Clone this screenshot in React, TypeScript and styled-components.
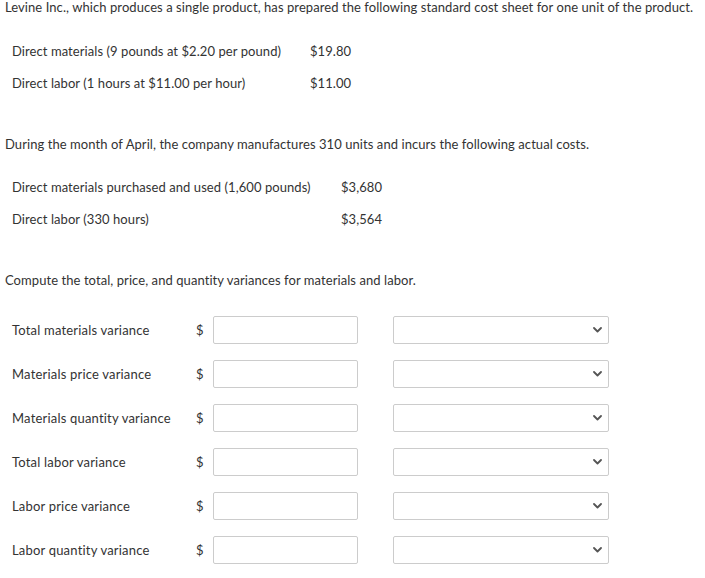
import React from "react";
import styled, { createGlobalStyle } from "styled-components";

const GlobalStyle = createGlobalStyle`
  html, body {
    margin: 0;
    padding: 0;
    background: #fff;
  }
  body {
    font-family: Lato, "Open Sans", Arial, sans-serif;
    font-size: 13px;
    color: #333;
    letter-spacing: 0.07px;
  }
`;

const standardCosts = [
  { label: "Direct materials (9 pounds at $2.20 per pound)", value: "$19.80" },
  { label: "Direct labor (1 hours at $11.00 per hour)", value: "$11.00" },
];

const actualCosts = [
  { label: "Direct materials purchased and used (1,600 pounds)", value: "$3,680" },
  { label: "Direct labor (330 hours)", value: "$3,564" },
];

const variances = [
  "Total materials variance",
  "Materials price variance",
  "Materials quantity variance",
  "Total labor variance",
  "Labor price variance",
  "Labor quantity variance",
];

function Chevron() {
  return (
    <svg width="9" height="6" viewBox="0 0 9 6">
      <polyline
        points="1,1 4.5,4.5 8,1"
        fill="none"
        stroke="#555"
        strokeWidth="1.8"
        strokeLinecap="round"
        strokeLinejoin="round"
      />
    </svg>
  );
}

function App() {
  return (
    <Page>
      <GlobalStyle />
      <Paragraph>
        Levine Inc., which produces a single product, has prepared the following standard cost sheet for
        one unit of the product.
      </Paragraph>

      <CostTable $labelWidth={298} $top={22}>
        {standardCosts.map((c) => (
          <CostRow key={c.label}>
            <CostLabel>{c.label}</CostLabel>
            <CostValue>{c.value}</CostValue>
          </CostRow>
        ))}
      </CostTable>

      <Paragraph $top={38}>
        During the month of April, the company manufactures 310 units and incurs the following actual costs.
      </Paragraph>

      <CostTable $labelWidth={329} $top={21}>
        {actualCosts.map((c) => (
          <CostRow key={c.label}>
            <CostLabel>{c.label}</CostLabel>
            <CostValue>{c.value}</CostValue>
          </CostRow>
        ))}
      </CostTable>

      <Paragraph $top={38}>Compute the total, price, and quantity variances for materials and labor.</Paragraph>

      <AnswerList>
        {variances.map((v) => (
          <AnswerRow key={v}>
            <AnswerLabel>{v}</AnswerLabel>
            <Dollar>$</Dollar>
            <AmountInput type="text" />
            <SelectBox>
              <Chevron />
            </SelectBox>
          </AnswerRow>
        ))}
      </AnswerList>
    </Page>
  );
}

const Page = styled.div`
  width: 705px;
  padding: 0 0 10px 0;
`;

const Paragraph = styled.p<{ $top?: number }>`
  margin: ${({ $top }) => $top || 0}px 0 0 0;
  padding-left: 5px;
  line-height: 14px;
  white-space: nowrap;
`;

const CostTable = styled.div<{ $labelWidth: number; $top: number }>`
  margin-top: ${({ $top }) => $top}px;
  padding-left: 12px;
  display: grid;
  grid-template-columns: ${({ $labelWidth }) => $labelWidth}px auto;
  justify-content: start;
`;

const CostRow = styled.div`
  display: contents;
`;

const CostLabel = styled.div`
  height: 31.5px;
  line-height: 31.5px;
  white-space: nowrap;
`;

const CostValue = styled.div`
  height: 31.5px;
  line-height: 31.5px;
`;

const AnswerList = styled.div`
  margin-top: 21px;
  padding-left: 12px;
  display: flex;
  flex-direction: column;
`;

const AnswerRow = styled.div`
  height: 44px;
  display: flex;
  align-items: center;
`;

const AnswerLabel = styled.div`
  width: 184px;
  white-space: nowrap;
  letter-spacing: 0.19px;
`;

const Dollar = styled.span`
  width: 17px;
`;

const AmountInput = styled.input`
  box-sizing: border-box;
  width: 145px;
  height: 28px;
  margin: 0;
  border: 1px solid #ccc;
  border-radius: 2px;
  background: #fff;
  font: inherit;
  padding: 0 6px;
`;

const SelectBox = styled.div`
  box-sizing: border-box;
  margin-left: 35px;
  width: 216px;
  height: 28px;
  border: 1px solid #ccc;
  border-radius: 2px;
  background: #fff;
  display: flex;
  align-items: center;
  justify-content: flex-end;
  padding-right: 6px;
`;

export default App;
